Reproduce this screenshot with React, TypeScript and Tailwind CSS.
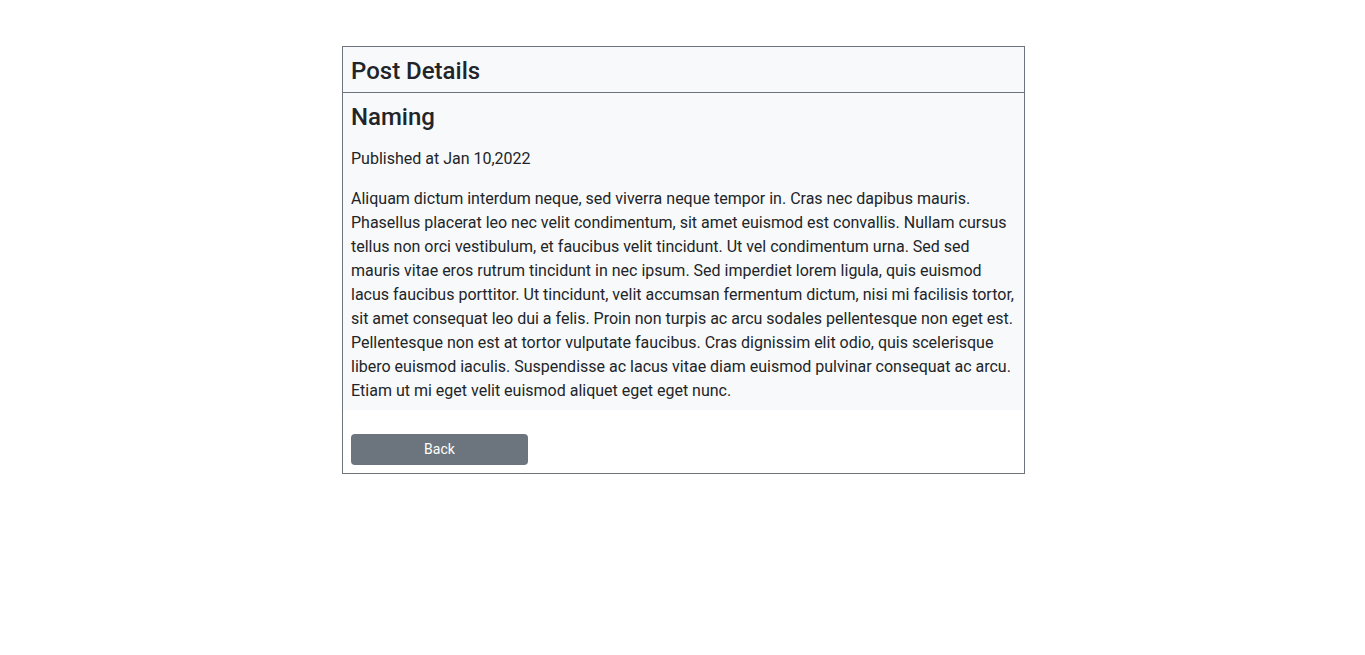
export default function App() {
  const body =
    'Aliquam dictum interdum neque, sed viverra neque tempor in. Cras nec dapibus mauris. Phasellus placerat leo nec velit condimentum, sit amet euismod est convallis. Nullam cursus tellus non orci vestibulum, et faucibus velit tincidunt. Ut vel condimentum urna. Sed sed mauris vitae eros rutrum tincidunt in nec ipsum. Sed imperdiet lorem ligula, quis euismod lacus faucibus porttitor. Ut tincidunt, velit accumsan fermentum dictum, nisi mi facilisis tortor, sit amet consequat leo dui a felis. Proin non turpis ac arcu sodales pellentesque non eget est. Pellentesque non est at tortor vulputate faucibus. Cras dignissim elit odio, quis scelerisque libero euismod iaculis. Suspendisse ac lacus vitae diam euismod pulvinar consequat ac arcu. Etiam ut mi eget velit euismod aliquet eget eget nunc.';

  return (
    <div className="min-h-screen bg-white pt-[46px] pl-[2px] text-[#212529]" style={{ fontFamily: 'Roboto, "Noto Sans", sans-serif' }}>
      <div className="mx-auto w-[683px] border border-[#6c757d]">
        {/* Card header */}
        <div className="border-b border-[#6c757d] bg-[#f8f9fa] px-2 pt-[10px] pb-[6px]">
          <h4 className="text-2xl leading-[1.2] font-medium">Post Details</h4>
        </div>

        {/* Post content */}
        <div className="bg-[#f8f9fa] px-2 pt-[10px] pb-[7px]">
          <h4 className="mb-[15px] text-2xl leading-[1.2] font-medium">Naming</h4>
          <p className="mb-4 text-base leading-6">Published at Jan 10,2022</p>
          <p className="text-base leading-6">{body}</p>
        </div>

        {/* Actions */}
        <div className="px-2 pt-6 pb-2">
          <button className="h-[31px] w-[177px] rounded-[4px] bg-[#6c757d] text-sm text-white">Back</button>
        </div>
      </div>
    </div>
  );
}
